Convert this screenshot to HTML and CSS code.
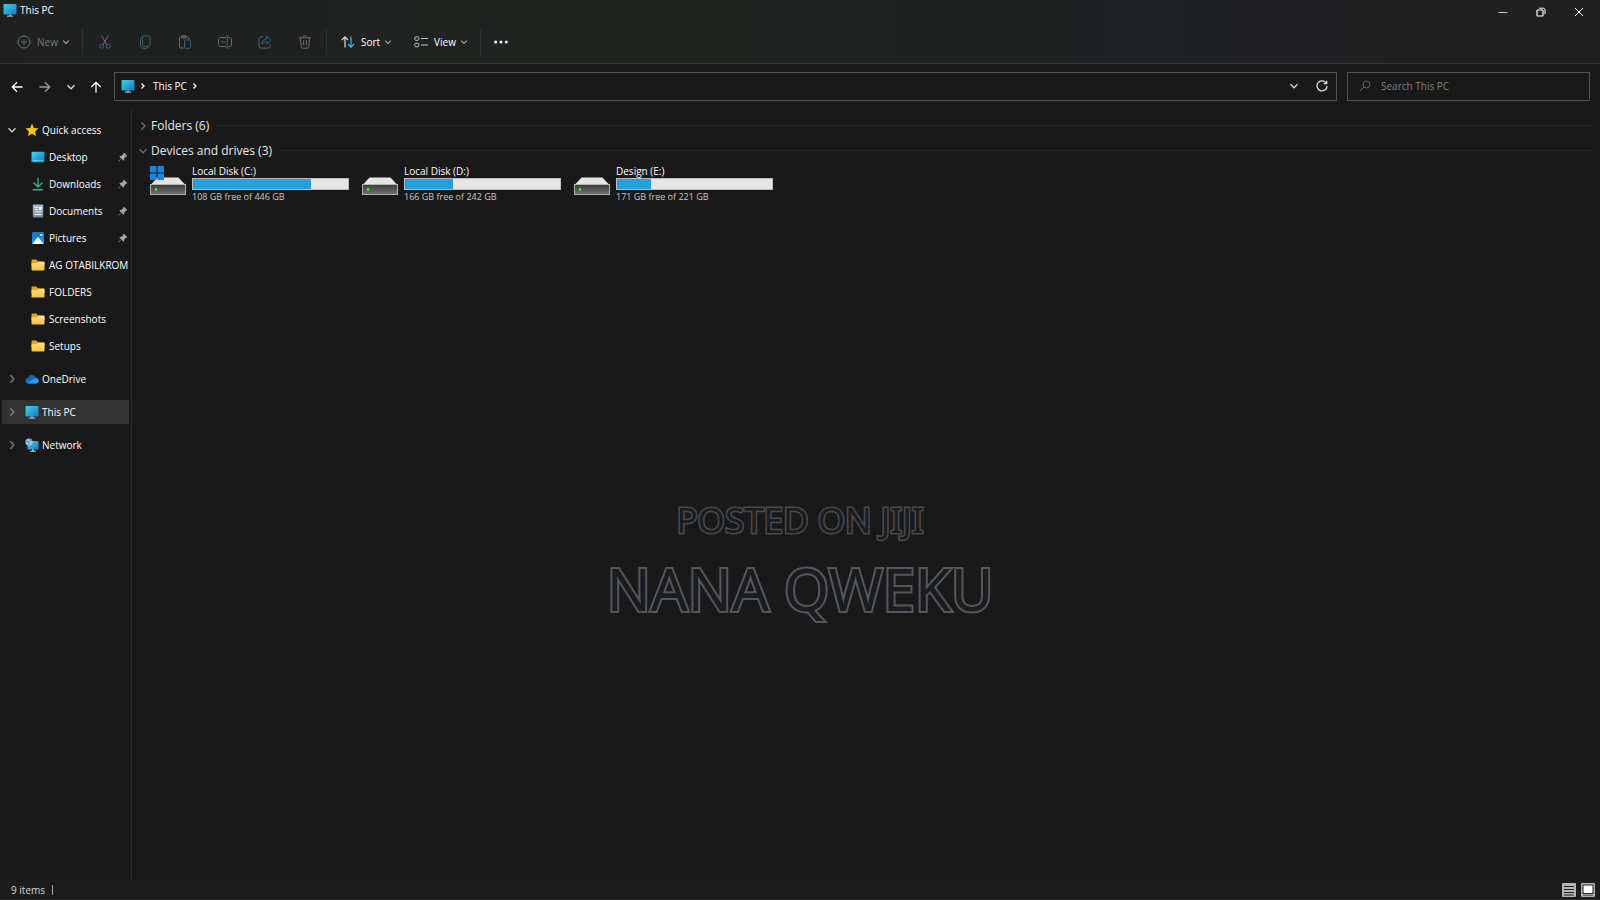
FILE: index.html
```html
<!DOCTYPE html>
<html lang="en">
<head>
  <meta charset="UTF-8" />
  <meta name="viewport" content="width=device-width, initial-scale=1.0"/>
  <title>This PC</title>
  <link rel="stylesheet" href="styles.css">
</head>
<body>

  <!-- Shared icons -->
  <svg class="sprite" aria-hidden="true">
    <defs>
      <linearGradient id="screenFill" x1="0" y1="0" x2="1" y2="1">
        <stop offset="0" stop-color="#3fd3e6"/>
        <stop offset="1" stop-color="#1479c4"/>
      </linearGradient>
      <linearGradient id="folderFill" x1="0" y1="0" x2="0" y2="1">
        <stop offset="0" stop-color="#ffe08a"/>
        <stop offset="1" stop-color="#f5c140"/>
      </linearGradient>
      <linearGradient id="driveFill" x1="0" y1="0" x2="0" y2="1">
        <stop offset="0" stop-color="#3c3c3c"/>
        <stop offset="1" stop-color="#707070"/>
      </linearGradient>
      <linearGradient id="pictureFill" x1="0" y1="0" x2="0" y2="1">
        <stop offset="0" stop-color="#1c6fc4"/>
        <stop offset="1" stop-color="#2a9be6"/>
      </linearGradient>
      <linearGradient id="docFill" x1="0" y1="0" x2="0" y2="1">
        <stop offset="0" stop-color="#a9b9cf"/>
        <stop offset="1" stop-color="#74869f"/>
      </linearGradient>
    </defs>
    <symbol id="pc" viewBox="0 0 14 14">
      <rect x="0.5" y="1" width="13" height="10.5" rx="0.8" fill="url(#screenFill)"/>
      <path d="M6 11.5h2v1.2H6z" fill="#9aa5ad"/>
      <path d="M4 12.6h6v1H4z" fill="#c9d2d8"/>
    </symbol>
    <symbol id="folder" viewBox="0 0 14 14">
      <path d="M.5 2.6c0-.6.4-1 1-1h3.8l1.6 1.6H12.500c.6 0 1 .4 1 1V8H.5z" fill="#e8a020"/>
      <path d="M.5 5.200h5l1.500-1.200h5.500c.6 0 1 .4 1 1v6.500c0 .6-.4 1-1 1h-11c-.6 0-1-.4-1-1z" fill="url(#folderFill)"/>
    </symbol>
    <symbol id="chevDown" viewBox="0 0 10 10">
      <path d="M1.500 3.300L5 6.800l3.500-3.500" fill="none" stroke="currentColor" stroke-width="1.300"/>
    </symbol>
    <symbol id="chevRight" viewBox="0 0 10 10">
      <path d="M3.300 1.200L7 5l-3.700 3.800" fill="none" stroke="currentColor" stroke-width="1.300"/>
    </symbol>
    <symbol id="pin" viewBox="0 0 10 10">
      <path d="M5.800.6l3.600 3.600-.9.500-.5-.1-1.700 1.800c.1.900-.1 1.700-.8 2.300L3.400 6.600.8 9.500l-.4-.4 2.700-2.700L1.300 4.500c.6-.7 1.400-.9 2.300-.8L5.400 2l-.1-.5z" fill="#a6a6a6"/>
    </symbol>
    <symbol id="drive" viewBox="0 0 36 32">
      <path d="M7.500 12.500h21l6.500 7H1z" fill="#e4e4e4"/>
      <rect x="0.500" y="19.500" width="35" height="10" fill="url(#driveFill)" stroke="#b4b4b4"/>
      <circle cx="6" cy="24.500" r="1.400" fill="#4fd84a"/>
    </symbol>
  </svg>

  <div class="window">

    <header class="top">
      <div class="titlebar">
        <div class="title">
          <svg class="icon"><use href="#pc"/></svg>
          <h1>This PC</h1>
        </div>
        <div class="window-buttons">
          <button type="button" aria-label="Minimize"><svg viewBox="0 0 10 10"><path d="M.5 5.500h9" stroke="#c8c8c8" fill="none"/></svg></button>
          <button type="button" aria-label="Restore"><svg viewBox="0 0 10 10" fill="none" stroke="#fff"><rect x="1" y="3" width="6" height="6" rx="0.800" stroke-width="1.200"/><path d="M3 1.200h4.300c1 0 1.700.7 1.700 1.700v4.300"/></svg></button>
          <button type="button" aria-label="Close"><svg viewBox="0 0 10 10"><path d="M1 1l8 8M9 1l-8 8" stroke="#fff" fill="none"/></svg></button>
        </div>
      </div>

      <div class="toolbar">
        <button type="button" class="tool tool-new" disabled>
          <svg class="icon" viewBox="0 0 14 14" fill="none"><circle cx="7" cy="7" r="6" stroke="#6e6e6e"/><path d="M7 4v6M4 7h6" stroke="#3f7482"/></svg>
          New
          <svg class="chev"><use href="#chevDown"/></svg>
        </button>
        <span class="divider"></span>
        <div class="tool-group">
          <button type="button" class="tool-icon" aria-label="Cut" disabled><svg class="icon" viewBox="0 0 14 14" fill="none"><path d="M3.500.5l5.300 9M10.500.5l-5.300 9" stroke="#6b6b6b"/><circle cx="3.700" cy="11.200" r="2" stroke="#32687a"/><circle cx="10.300" cy="11.200" r="2" stroke="#32687a"/></svg></button>
          <button type="button" class="tool-icon" aria-label="Copy" disabled><svg class="icon" viewBox="0 0 14 14" fill="none"><rect x="4.500" y="0.800" width="7.500" height="10.500" rx="1.500" stroke="#3a5f6a"/><path d="M4.300 2.500c-1 .2-1.800.8-1.800 2v6c0 1.700 1 2.700 2.700 2.700h3c1 0 1.600-.4 2-1.200" stroke="#5a6062"/></svg></button>
          <button type="button" class="tool-icon" aria-label="Paste" disabled><svg class="icon" viewBox="0 0 14 14" fill="none"><path d="M5.500 13H2.500c-.6 0-1-.4-1-1V2.800c0-.6.4-1 1-1h7c.6 0 1 .4 1 1v1.500M4 1.800V3h4V.7H4z" stroke="#6b6b6b"/><rect x="6.500" y="5" width="6" height="8.300" rx="0.800" stroke="#37616e"/></svg></button>
          <button type="button" class="tool-icon" aria-label="Rename" disabled><svg class="icon" viewBox="0 0 14 14" fill="none"><path d="M8 2.500H2.500c-1 0-2 .8-2 2v5c0 1.200 1 2 2 2H8M10.500 2.500h1c1.200 0 2 .8 2 2v5c0 1.200-.8 2-2 2h-1" stroke="#6b6b6b"/><path d="M3 7h5M9.300 1v12M7.800.7c.8 0 1.500.4 1.500 1 0-.6.700-1 1.500-1M7.800 13.300c.8 0 1.500-.4 1.500-1 0 .6.700 1 1.500 1" stroke="#337084"/></svg></button>
          <button type="button" class="tool-icon" aria-label="Share" disabled><svg class="icon" viewBox="0 0 14 14" fill="none"><path d="M5 1.800H2.800c-1 0-1.800.8-1.800 1.800v7.600c0 1 .8 1.800 1.800 1.800h7.400c1 0 1.800-.8 1.800-1.800V9.500" stroke="#626262"/><path d="M8.800 1.300l4.200 3.900-4.200 3.900V6.800C6.500 6.800 5 7.600 3.800 9.200c.2-3 1.900-5.300 5-5.500z" stroke="#31657c"/></svg></button>
          <button type="button" class="tool-icon" aria-label="Delete" disabled><svg class="icon" viewBox="0 0 14 14" fill="none" stroke="#6b6b6b"><path d="M1 2.800h12M5 2.800c0-1.300.8-2 2-2s2 .7 2 2M2.300 2.800l1 9c.1.800.7 1.400 1.500 1.400h4.400c.8 0 1.400-.6 1.500-1.400l1-9M5.600 5.300v5M8.400 5.300v5"/></svg></button>
        </div>
        <span class="divider"></span>
        <button type="button" class="tool tool-sort">
          <svg class="icon" viewBox="0 0 14 14" fill="none" stroke-width="1.200"><path d="M4 12.500V2M.8 5L4 1.800 7 5" stroke="#d8d8d8"/><path d="M10 1.500V12M7 9l3 3.200L13.200 9" stroke="#45b5dd"/></svg>
          Sort
          <svg class="chev"><use href="#chevDown"/></svg>
        </button>
        <button type="button" class="tool tool-view">
          <svg class="icon" viewBox="0 0 14 14" fill="none" stroke="#c4c4c4"><rect x="0.800" y="1.800" width="4" height="3.500" rx="1"/><rect x="0.800" y="8.300" width="4" height="3.500" rx="1"/><path d="M7 3.500h7M7 10h7"/></svg>
          View
          <svg class="chev"><use href="#chevDown"/></svg>
        </button>
        <span class="divider"></span>
        <button type="button" class="tool-icon tool-more" aria-label="See more"><svg class="icon" viewBox="0 0 14 14" fill="#fff"><circle cx="1.700" cy="7" r="1.500"/><circle cx="7" cy="7" r="1.500"/><circle cx="12.300" cy="7" r="1.500"/></svg></button>
      </div>
    </header>

    <div class="navbar">
      <div class="nav-buttons">
        <button type="button" class="back" aria-label="Back"><svg viewBox="0 0 12 12"><path d="M11.500 6H1.500M6 1.300L1.300 6 6 10.700" stroke="#fff"/></svg></button>
        <button type="button" aria-label="Forward"><svg viewBox="0 0 12 12"><path d="M.5 6h10M6 1.300L10.700 6 6 10.700" stroke="#9c9c9c"/></svg></button>
        <button type="button" aria-label="Recent locations"><svg viewBox="0 0 12 12"><path d="M2.500 4.300L6 7.800l3.500-3.500" stroke="#e0e0e0"/></svg></button>
        <button type="button" aria-label="Up"><svg viewBox="0 0 12 12"><path d="M6 11.500V1.500M1.300 6L6 1.300 10.700 6" stroke="#fff"/></svg></button>
      </div>
      <div class="address">
        <svg class="icon"><use href="#pc"/></svg>
        <svg class="crumb-arrow" viewBox="0 0 8 8"><path d="M2.500 1.500L5 4 2.500 6.500"/></svg>
        <a href="#">This PC</a>
        <svg class="crumb-arrow" viewBox="0 0 8 8"><path d="M2.500 1.500L5 4 2.500 6.500"/></svg>
        <button type="button" class="history" aria-label="Previous locations"><svg viewBox="0 0 12 12"><path d="M2.500 4.300L6 7.800l3.500-3.500" stroke="#d0d0d0"/></svg></button>
        <button type="button" aria-label="Refresh"><svg viewBox="0 0 12 12"><path d="M10.300 3.300A5 5 0 1 0 11 6M10.700.7v3H7.700" stroke="#e0e0e0"/></svg></button>
      </div>
      <label class="search">
        <svg viewBox="0 0 12 12"><circle cx="7.500" cy="4.500" r="3.500"/><path d="M5 7L.8 11.200"/></svg>
        <input type="search" placeholder="Search This PC" aria-label="Search This PC">
      </label>
    </div>

    <div class="main">

      <nav class="sidebar">
        <ul class="quick">
          <li><a href="#" class="root">
            <svg class="toggle open"><use href="#chevDown"/></svg>
            <svg class="icon" viewBox="0 0 14 14"><path d="M7 .8l1.900 4.100 4.500.5-3.300 3.100.9 4.500L7 10.800 3 13l.9-4.500L.6 5.400l4.500-.5z" fill="#fcc419"/></svg>
            <span>Quick access</span>
          </a></li>
          <li><a href="#">
            <svg class="icon" viewBox="0 0 14 14"><rect x="0.500" y="1.800" width="13" height="10.500" rx="1" fill="url(#screenFill)"/><path d="M2 4h1.200M2 6h1.200M2 10.800h10" stroke="#6fd6ea"/></svg>
            <span>Desktop</span>
            <svg class="pin"><use href="#pin"/></svg>
          </a></li>
          <li><a href="#">
            <svg class="icon" viewBox="0 0 14 14" fill="none" stroke="#2cb58c" stroke-width="1.400"><path d="M7 .8v9M2.500 5.500L7 10l4.500-4.500M1.800 12.800h10.400"/></svg>
            <span>Downloads</span>
            <svg class="pin"><use href="#pin"/></svg>
          </a></li>
          <li><a href="#">
            <svg class="icon" viewBox="0 0 14 14"><rect x="1.800" y="0.500" width="10.400" height="13" rx="0.800" fill="url(#docFill)"/><path d="M3.500 3.500h3.500M3.500 5.500h3.500M3.500 8h7M3.500 10.500h7" stroke="#eef3fa"/><rect x="8" y="3" width="2.800" height="3" fill="#fff"/></svg>
            <span>Documents</span>
            <svg class="pin"><use href="#pin"/></svg>
          </a></li>
          <li><a href="#">
            <svg class="icon" viewBox="0 0 14 14"><rect x="1" y="1" width="12" height="12" rx="1" fill="url(#pictureFill)"/><path d="M1.500 13l4.700-6.200c.4-.5 1.200-.5 1.600 0l4.700 6.200z" fill="#f2f8ff"/><circle cx="10.200" cy="4" r="1.100" fill="#fff"/></svg>
            <span>Pictures</span>
            <svg class="pin"><use href="#pin"/></svg>
          </a></li>
          <li><a href="#"><svg class="icon"><use href="#folder"/></svg><span>AG OTABILKROM</span></a></li>
          <li><a href="#"><svg class="icon"><use href="#folder"/></svg><span>FOLDERS</span></a></li>
          <li><a href="#"><svg class="icon"><use href="#folder"/></svg><span>Screenshots</span></a></li>
          <li><a href="#"><svg class="icon"><use href="#folder"/></svg><span>Setups</span></a></li>
        </ul>
        <ul class="places">
          <li><a href="#" class="root">
            <svg class="toggle"><use href="#chevRight"/></svg>
            <svg class="icon" viewBox="0 0 14 14"><path d="M3.500 11.500C1.600 11.500.3 10.200.3 8.600c0-1.500 1.100-2.700 2.600-2.900C3.500 4 5 2.900 6.800 2.900c1.700 0 3.100 1 3.800 2.500 1.800.1 3.100 1.400 3.100 3 0 1.700-1.300 3.100-3.100 3.100z" fill="#0f6cbd"/><path d="M2.200 11.200l6.300-4.300c1.500-1 5.200-.6 5.200 1.800 0 1.600-1.300 2.800-3.100 2.800H3.500z" fill="#2b9cea"/></svg>
            <span>OneDrive</span>
          </a></li>
          <li><a href="#" class="root active">
            <svg class="toggle"><use href="#chevRight"/></svg>
            <svg class="icon"><use href="#pc"/></svg>
            <span>This PC</span>
          </a></li>
          <li><a href="#" class="root">
            <svg class="toggle"><use href="#chevRight"/></svg>
            <svg class="icon" viewBox="0 0 14 14"><rect x="2.500" y="3" width="11" height="8.500" rx="0.800" fill="url(#screenFill)"/><path d="M7 11.500h2v1.300h2v.9H5v-.9h2z" fill="#b9c4cc"/><circle cx="4" cy="4" r="3.600" fill="#9cc9e6"/><path d="M1 3c1.500 1 2.500 0 3 1.200S3 6 4.500 7M4 .8C4 2 6 2.500 7 2.500" stroke="#3f7fae" fill="none"/></svg>
            <span>Network</span>
          </a></li>
        </ul>
      </nav>

      <main class="content">
        <section>
          <h2><svg class="toggle"><use href="#chevRight"/></svg>Folders (6)</h2>
        </section>
        <section>
          <h2><svg class="toggle"><use href="#chevDown"/></svg>Devices and drives (3)</h2>
          <div class="drives">
            <a href="#" class="drive">
              <svg class="drive-icon" viewBox="0 0 36 32"><use href="#drive"/><path d="M0 1h6.500v6.500H0zM7.500 1H14v6.500H7.500zM0 8.500h6.500V15H0zM7.500 8.500H14V15H7.500z" fill="#1786dc"/></svg>
              <div class="drive-info">
                <h3>Local Disk (C:)</h3>
                <div class="bar"><div class="used" style="width: 76%"></div></div>
                <p>108 GB free of 446 GB</p>
              </div>
            </a>
            <a href="#" class="drive">
              <svg class="drive-icon"><use href="#drive"/></svg>
              <div class="drive-info">
                <h3>Local Disk (D:)</h3>
                <div class="bar"><div class="used" style="width: 31%"></div></div>
                <p>166 GB free of 242 GB</p>
              </div>
            </a>
            <a href="#" class="drive">
              <svg class="drive-icon"><use href="#drive"/></svg>
              <div class="drive-info">
                <h3>Design (E:)</h3>
                <div class="bar"><div class="used" style="width: 22%"></div></div>
                <p>171 GB free of 221 GB</p>
              </div>
            </a>
          </div>
        </section>
      </main>
    </div>

    <footer class="statusbar">
      <span class="count">9 items</span>
      <div class="view-buttons">
        <button type="button" aria-label="Details view"><svg viewBox="0 0 14 14"><rect width="14" height="14" rx="1" fill="#b4b4b4"/><path d="M2 3.500h10M2 6.500h10M2 9.500h10M2 12h10" stroke="#222"/></svg></button>
        <button type="button" aria-label="Large icons view"><svg viewBox="0 0 14 14"><rect width="14" height="14" rx="1" fill="#b4b4b4"/><rect x="2" y="2" width="10" height="8.500" fill="#fff" stroke="#222"/><path d="M2 12.300h10" stroke="#555"/></svg></button>
      </div>
    </footer>

    <div class="watermark">
      <p class="posted">POSTED ON JIJI</p>
      <p class="name">NANA QWEKU</p>
    </div>
  </div>

</body>
</html>
```
FILE: styles.css
```css
* {
  box-sizing: border-box;
}
body {
  margin: 0;
  background: #191919;
  color: #fff;
  font-family: "Open Sans", "Noto Sans", sans-serif;
  font-size: 10px;
  line-height: 14px;
}
h1, h2, h3, p, ul {
  margin: 0;
  padding: 0;
  font-size: inherit;
  font-weight: normal;
}
ul { list-style: none; }
a {
  color: inherit;
  text-decoration: none;
}
button {
  display: flex;
  align-items: center;
  justify-content: center;
  background: none;
  border: none;
  padding: 0;
  color: inherit;
  font: inherit;
}
svg {
  display: block;
  flex: none;
}
.sprite {
  position: absolute;
  width: 0;
  height: 0;
}
.icon {
  width: 14px;
  height: 14px;
}
.window {
  position: relative;
  min-height: 100vh;
  display: flex;
  flex-direction: column;
}

/* Title bar and toolbar */
.top {
  background: linear-gradient(90deg, #202020, #1f2221 18%, #1f2420 34%, #1f2221 60%, #212124 80%, #202020 88%);
  border-bottom: 1px solid #383838;
}
.titlebar {
  display: flex;
  justify-content: space-between;
  height: 24px;
}
.title {
  display: flex;
  align-items: center;
  gap: 3px;
  height: 20px;
  padding-left: 3px;
}
.window-buttons {
  display: flex;
  padding-right: 2px;
}
.window-buttons button {
  width: 38px;
}
.window-buttons svg {
  width: 10px;
  height: 10px;
}
.toolbar {
  display: flex;
  align-items: center;
  height: 39px;
  padding: 0 0 3px 17px;
}
.tool {
  gap: 6px;
}
.tool .chev {
  width: 8px;
  height: 8px;
  margin-left: -2px;
  color: #a8a8a8;
}
.tool-new { color: #777; }
.tool-sort {
  margin-left: 14px;
}
.tool-view {
  margin-left: 22px;
}
.divider {
  width: 1px;
  height: 26px;
  margin-left: 12px;
  background: #303231;
}
.tool-group {
  display: flex;
  padding-left: 2px;
}
.tool-group .tool-icon {
  width: 40px;
}
.tool-group + .divider {
  margin-left: 1px;
}
.tool-more {
  margin-left: 13px;
}

/* Address row */
.navbar {
  display: flex;
  align-items: center;
  padding: 8px 10px 8px 4px;
}
.nav-buttons {
  display: flex;
  width: 110px;
  justify-content: space-between;
  padding: 0 12px 0 7px;
}
.nav-buttons .back {
  margin-right: 3px;
}
.nav-buttons svg, .address button svg {
  width: 12px;
  height: 12px;
  fill: none;
  stroke-width: 1.3;
}
.address {
  flex: 1;
  display: flex;
  align-items: center;
  height: 29px;
  padding: 0 8px 1px 6px;
  border: 1px solid #535353;
}
.address a {
  margin: 0 4px 0 6px;
}
.crumb-arrow {
  width: 8px;
  height: 8px;
  margin-left: 4px;
  fill: none;
  stroke: #fff;
  stroke-width: 1.3;
}
.address a + .crumb-arrow {
  margin-left: 0;
}
.address .history {
  margin-left: auto;
  margin-right: 16px;
}
.search {
  display: flex;
  align-items: center;
  gap: 10px;
  width: 243px;
  height: 29px;
  margin-left: 10px;
  padding: 0 11px 1px;
  border: 1px solid #535353;
}
.search svg {
  width: 12px;
  height: 12px;
  fill: none;
  stroke: #666;
}
.search input {
  flex: 1;
  min-width: 0;
  padding: 0;
  background: none;
  border: none;
  outline: none;
  color: #fff;
  font: inherit;
}
.search input::placeholder {
  color: #7d7d7d;
}

/* Sidebar */
.main {
  flex: 1;
  display: flex;
}
.sidebar {
  width: 132px;
  flex: none;
  padding: 9px 2px 0;
  border-right: 1px solid #2c2c2c;
}
.sidebar a {
  display: flex;
  align-items: center;
  gap: 4px;
  height: 24px;
  padding-left: 29px;
  white-space: nowrap;
}
.sidebar a.root {
  gap: 3px;
  padding-left: 5px;
}
.sidebar a.active {
  background: #333;
}
.sidebar .toggle {
  width: 10px;
  height: 10px;
  margin-right: 5px;
  color: #808080;
}
.sidebar .toggle.open {
  color: #d0d0d0;
}
.sidebar .pin {
  width: 10px;
  height: 10px;
  margin-left: auto;
  margin-right: 1px;
}
.quick {
  display: grid;
  gap: 3px;
}
.places {
  display: grid;
  gap: 9px;
  margin-top: 9px;
}

/* File list */
.content {
  flex: 1;
  min-width: 0;
  padding: 4px 8px 0 6px;
}
.content h2 {
  display: flex;
  align-items: center;
  height: 25px;
  font-size: 12px;
  line-height: 16px;
  color: #e8e8e8;
}
.content h2::after {
  content: "";
  flex: 1;
  height: 1px;
  margin-left: 8px;
  background: #272727;
}
.content .toggle {
  width: 10px;
  height: 10px;
  margin-right: 3px;
  color: #707070;
}
.drives {
  display: flex;
  flex-wrap: wrap;
  gap: 13px;
  padding-left: 12px;
}
.drive {
  display: flex;
  gap: 6px;
  width: 199px;
}
.drive-icon {
  width: 36px;
  height: 32px;
  margin-top: 2px;
}
.drive-info {
  flex: 1;
}
.drive-info h3 {
  padding-top: 1px;
}
.drive-info p {
  font-size: 9px;
  color: #c8c8c8;
}
.bar {
  height: 12px;
  border: 1px solid #bcbcbc;
  background: #e6e6e6;
}
.used {
  height: 100%;
  background: #26a0da;
}

/* Status bar */
.statusbar {
  display: flex;
  align-items: center;
  justify-content: space-between;
  height: 20px;
  padding: 0 5px 0 11px;
  background: #1c1c1c;
  border-bottom: 1px solid #2a2a2a;
}
.count {
  padding-right: 7px;
  border-right: 1px solid #a0a0a0;
  line-height: 10px;
  color: #d8d8d8;
}
.view-buttons {
  display: flex;
  gap: 5px;
}
.view-buttons svg {
  width: 14px;
  height: 14px;
}

/* Watermark over the window */
.watermark {
  position: absolute;
  top: 495px;
  left: 0;
  right: 0;
  text-align: center;
  font-family: "Noto Sans", sans-serif;
  color: #191c20;
  pointer-events: none;
  paint-order: stroke;
}
.posted {
  font-size: 35px;
  line-height: 50px;
  -webkit-text-stroke: 3px #4a4a4b;
}
.name {
  margin-top: 2px;
  font-size: 58px;
  line-height: 84px;
  -webkit-text-stroke: 4px #555657;
}
```
